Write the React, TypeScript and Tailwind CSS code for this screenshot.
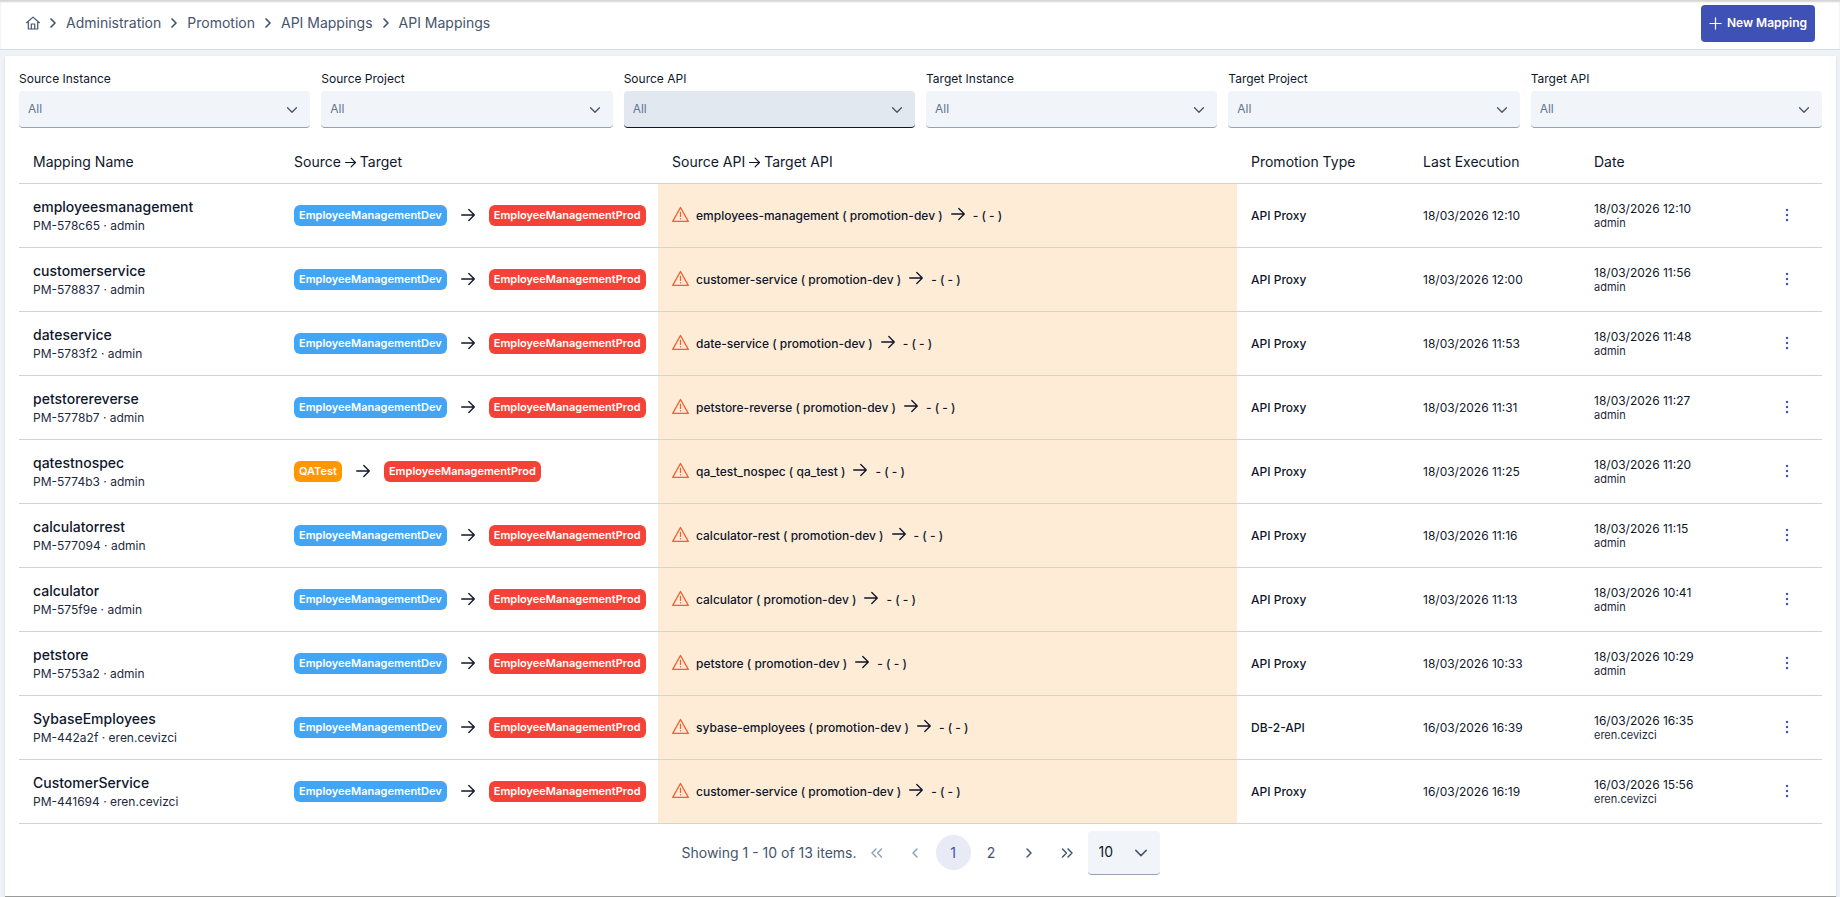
import { useState } from 'react';

interface Mapping {
    name: string;
    code: string;
    owner: string;
    source: string;
    target: string;
    api: string;
    project: string;
    type: string;
    lastExecution: string;
    date: string;
}

const DEV = 'EmployeeManagementDev';
const PROD = 'EmployeeManagementProd';

const mappings: Mapping[] = [
    { name: 'employeesmanagement', code: 'PM-578c65', owner: 'admin', source: DEV, target: PROD, api: 'employees-management', project: 'promotion-dev', type: 'API Proxy', lastExecution: '18/03/2026 12:10', date: '18/03/2026 12:10' },
    { name: 'customerservice', code: 'PM-578837', owner: 'admin', source: DEV, target: PROD, api: 'customer-service', project: 'promotion-dev', type: 'API Proxy', lastExecution: '18/03/2026 12:00', date: '18/03/2026 11:56' },
    { name: 'dateservice', code: 'PM-5783f2', owner: 'admin', source: DEV, target: PROD, api: 'date-service', project: 'promotion-dev', type: 'API Proxy', lastExecution: '18/03/2026 11:53', date: '18/03/2026 11:48' },
    { name: 'petstorereverse', code: 'PM-5778b7', owner: 'admin', source: DEV, target: PROD, api: 'petstore-reverse', project: 'promotion-dev', type: 'API Proxy', lastExecution: '18/03/2026 11:31', date: '18/03/2026 11:27' },
    { name: 'qatestnospec', code: 'PM-5774b3', owner: 'admin', source: 'QATest', target: PROD, api: 'qa_test_nospec', project: 'qa_test', type: 'API Proxy', lastExecution: '18/03/2026 11:25', date: '18/03/2026 11:20' },
    { name: 'calculatorrest', code: 'PM-577094', owner: 'admin', source: DEV, target: PROD, api: 'calculator-rest', project: 'promotion-dev', type: 'API Proxy', lastExecution: '18/03/2026 11:16', date: '18/03/2026 11:15' },
    { name: 'calculator', code: 'PM-575f9e', owner: 'admin', source: DEV, target: PROD, api: 'calculator', project: 'promotion-dev', type: 'API Proxy', lastExecution: '18/03/2026 11:13', date: '18/03/2026 10:41' },
    { name: 'petstore', code: 'PM-5753a2', owner: 'admin', source: DEV, target: PROD, api: 'petstore', project: 'promotion-dev', type: 'API Proxy', lastExecution: '18/03/2026 10:33', date: '18/03/2026 10:29' },
    { name: 'SybaseEmployees', code: 'PM-442a2f', owner: 'eren.cevizci', source: DEV, target: PROD, api: 'sybase-employees', project: 'promotion-dev', type: 'DB-2-API', lastExecution: '16/03/2026 16:39', date: '16/03/2026 16:35' },
    { name: 'CustomerService', code: 'PM-441694', owner: 'eren.cevizci', source: DEV, target: PROD, api: 'customer-service', project: 'promotion-dev', type: 'API Proxy', lastExecution: '16/03/2026 16:19', date: '16/03/2026 15:56' },
];

const filters = ['Source Instance', 'Source Project', 'Source API', 'Target Instance', 'Target Project', 'Target API'];
const crumbs = ['Administration', 'Promotion', 'API Mappings', 'API Mappings'];

const badgeColors: Record<string, string> = {
    [DEV]: 'bg-[#42a5f5]',
    [PROD]: 'bg-[#f44336]',
    QATest: 'bg-[#ff9800]',
};

function Icon({ d, className, width = 1.5 }: { d: string; className: string; width?: number }) {
    return (
        <svg viewBox="0 0 14 14" fill="none" stroke="currentColor" strokeWidth={width} strokeLinecap="round" strokeLinejoin="round" className={`shrink-0 ${className}`} aria-hidden="true">
            <path d={d} />
        </svg>
    );
}

const ARROW = 'M0.7 7H13.3M7.8 1.5L13.3 7L7.8 12.5';
const CHEVRON_DOWN = 'M1.8 4.4L7 9.6L12.2 4.4';
const CHEVRON_RIGHT = 'M5 3L9 7L5 11';
const CHEVRON_LEFT = 'M9 3L5 7L9 11';
const DOUBLE_RIGHT = 'M2.5 3L6.5 7L2.5 11M8 3L12 7L8 11';
const DOUBLE_LEFT = 'M6 3L2 7L6 11M11.5 3L7.5 7L11.5 11';

function Badge({ label }: { label: string }) {
    return <span className={`h-[21px] rounded-md px-[5px] text-[11px] leading-[21px] font-semibold text-white ${badgeColors[label]}`}>{label}</span>;
}

function Filter({ label, active }: { label: string; active: boolean }) {
    return (
        <label className="flex flex-col gap-[3px] text-xs leading-[18px]">
            {label}
            <span className="grid items-center">
                <select
                    className={`col-start-1 row-start-1 h-[37px] w-full appearance-none rounded border-b px-[9px] text-xs text-slate-500 outline-none ${active ? 'border-slate-900 bg-slate-200' : 'border-slate-400 bg-slate-100'}`}
                >
                    <option>All</option>
                </select>
                <Icon d={CHEVRON_DOWN} className="pointer-events-none col-start-1 row-start-1 mr-3 size-3 justify-self-end text-slate-600" />
            </span>
        </label>
    );
}

function PageButton({ label, d, disabled, onClick }: { label: string; d: string; disabled?: boolean; onClick: () => void }) {
    return (
        <button type="button" aria-label={label} disabled={disabled} onClick={onClick} className="flex size-[35px] items-center justify-center rounded-full text-slate-600 disabled:text-slate-400">
            <Icon d={d} className="size-[14px]" />
        </button>
    );
}

export default function App() {
    const [page, setPage] = useState(1);

    return (
        <div className="flex min-h-screen flex-col bg-[#eff3f8] font-['Inter',sans-serif] text-slate-900">
            <header className="flex h-[50px] items-center justify-between border-b border-[#d5dce4] bg-white pr-[25px] pb-[3px] pl-[26px] shadow-[inset_0_2px_2px_#d4d4d4]">
                <nav aria-label="Breadcrumb" className="flex items-center gap-[6px] text-sm text-slate-600">
                    <a href="#" aria-label="Home">
                        <Icon d="M0.6 6.7L7 1.1L13.4 6.7M2.3 5.3V13H11.7V5.3M5.3 13V8H8.7V13" width={1.2} className="size-[14px]" />
                    </a>
                    {crumbs.map((crumb, i) => (
                        <span key={i} className="flex items-center gap-[6px]">
                            <Icon d={CHEVRON_RIGHT} width={1.7} className="size-[14px]" />
                            <a href="#">{crumb}</a>
                        </span>
                    ))}
                </nav>
                <button type="button" className="flex h-[37px] items-center gap-[5px] rounded bg-[#3f51b5] px-2 text-xs font-semibold text-white">
                    <Icon d="M7 1V13M1 7H13" width={1.3} className="size-[13px]" />
                    New Mapping
                </button>
            </header>

            <main className="mt-[6px] mr-1 ml-[5px] flex flex-1 flex-col border-b border-[#9a9a9a] bg-white px-[14px] pt-[14px] shadow-sm">
                <div className="grid grid-cols-6 gap-[11px]">
                    {filters.map(label => (
                        <Filter key={label} label={label} active={label === 'Source API'} />
                    ))}
                </div>

                <table className="mt-4 w-full table-fixed border-collapse text-left text-xs">
                    <colgroup>
                        <col className="w-[261px]" />
                        <col className="w-[378px]" />
                        <col />
                        <col className="w-[172px]" />
                        <col className="w-[171px]" />
                        <col className="w-[172px]" />
                        <col className="w-[70px]" />
                    </colgroup>
                    <thead>
                        <tr className="h-[39px] border-b border-slate-300 text-sm [&>th]:px-[14px] [&>th]:pb-[2px] [&>th]:font-normal">
                            <th>Mapping Name</th>
                            <th>
                                <span className="flex items-center gap-1">
                                    Source <Icon d={ARROW} className="size-[11px]" /> Target
                                </span>
                            </th>
                            <th>
                                <span className="flex items-center gap-1">
                                    Source API <Icon d={ARROW} className="size-[11px]" /> Target API
                                </span>
                            </th>
                            <th>Promotion Type</th>
                            <th>Last Execution</th>
                            <th>Date</th>
                            <th aria-label="Actions" />
                        </tr>
                    </thead>
                    <tbody>
                        {mappings.map(m => (
                            <tr key={m.code} className="h-16 border-b border-slate-300 [&>td]:px-[14px]">
                                <td className="pt-[2px]">
                                    <div className="text-sm leading-[18px] font-medium">{m.name}</div>
                                    <div className="leading-[19px] text-slate-800">{m.code} · {m.owner}</div>
                                </td>
                                <td>
                                    <div className="flex items-center gap-[14px]">
                                        <Badge label={m.source} />
                                        <Icon d={ARROW} width={1.3} className="size-[14px]" />
                                        <Badge label={m.target} />
                                    </div>
                                </td>
                                <td className="bg-[#ffecd6] font-medium">
                                    <div className="flex items-center">
                                        <Icon d="M7 1.2L13.4 12.7H0.6ZM7 5.2V8.6M7 10.4V10.6" width={1.1} className="mr-[7px] mb-px size-[17px] text-[#f4602f]" />
                                        <span className="pt-px">{m.api} ( {m.project} )</span>
                                        <Icon d={ARROW} width={1.3} className="mx-2 mb-[2px] size-[14px]" />
                                        <span className="pt-px">- ( - )</span>
                                    </div>
                                </td>
                                <td className="pt-px font-medium">{m.type}</td>
                                <td className="pt-px">{m.lastExecution}</td>
                                <td>
                                    <div className="leading-4">{m.date}</div>
                                    <div className="text-[11px] leading-[13px] text-slate-800">{m.owner}</div>
                                </td>
                                <td>
                                    <button type="button" aria-label={`Actions for ${m.name}`} className="mx-auto flex size-[35px] items-center justify-center text-[#3f51b5]">
                                        <svg viewBox="0 0 14 14" fill="currentColor" className="size-[14px]" aria-hidden="true">
                                            <circle cx="7" cy="2" r="1.2" />
                                            <circle cx="7" cy="7" r="1.2" />
                                            <circle cx="7" cy="12" r="1.2" />
                                        </svg>
                                    </button>
                                </td>
                            </tr>
                        ))}
                    </tbody>
                </table>

                <div className="flex items-center justify-center gap-[3px] pt-[7px] pb-5 text-sm text-slate-600">
                    <span>Showing 1 - 10 of 13 items.</span>
                    <PageButton label="First page" d={DOUBLE_LEFT} disabled={page === 1} onClick={() => setPage(1)} />
                    <PageButton label="Previous page" d={CHEVRON_LEFT} disabled={page === 1} onClick={() => setPage(1)} />
                    {[1, 2].map(n => (
                        <button key={n} type="button" onClick={() => setPage(n)} className={`size-[35px] rounded-full ${n === page ? 'bg-[#e8eaf6] text-[#3f51b5]' : ''}`}>
                            {n}
                        </button>
                    ))}
                    <PageButton label="Next page" d={CHEVRON_RIGHT} onClick={() => setPage(2)} />
                    <PageButton label="Last page" d={DOUBLE_RIGHT} onClick={() => setPage(2)} />
                    <span className="grid items-center">
                        <select aria-label="Rows per page" className="col-start-1 row-start-1 h-[44px] w-[72px] appearance-none rounded border-b border-slate-400 bg-slate-100 px-[11px] text-sm text-slate-900 outline-none">
                            <option>10</option>
                        </select>
                        <Icon d={CHEVRON_DOWN} className="pointer-events-none col-start-1 row-start-1 mr-3 size-[14px] justify-self-end" />
                    </span>
                </div>
            </main>
        </div>
    );
}
